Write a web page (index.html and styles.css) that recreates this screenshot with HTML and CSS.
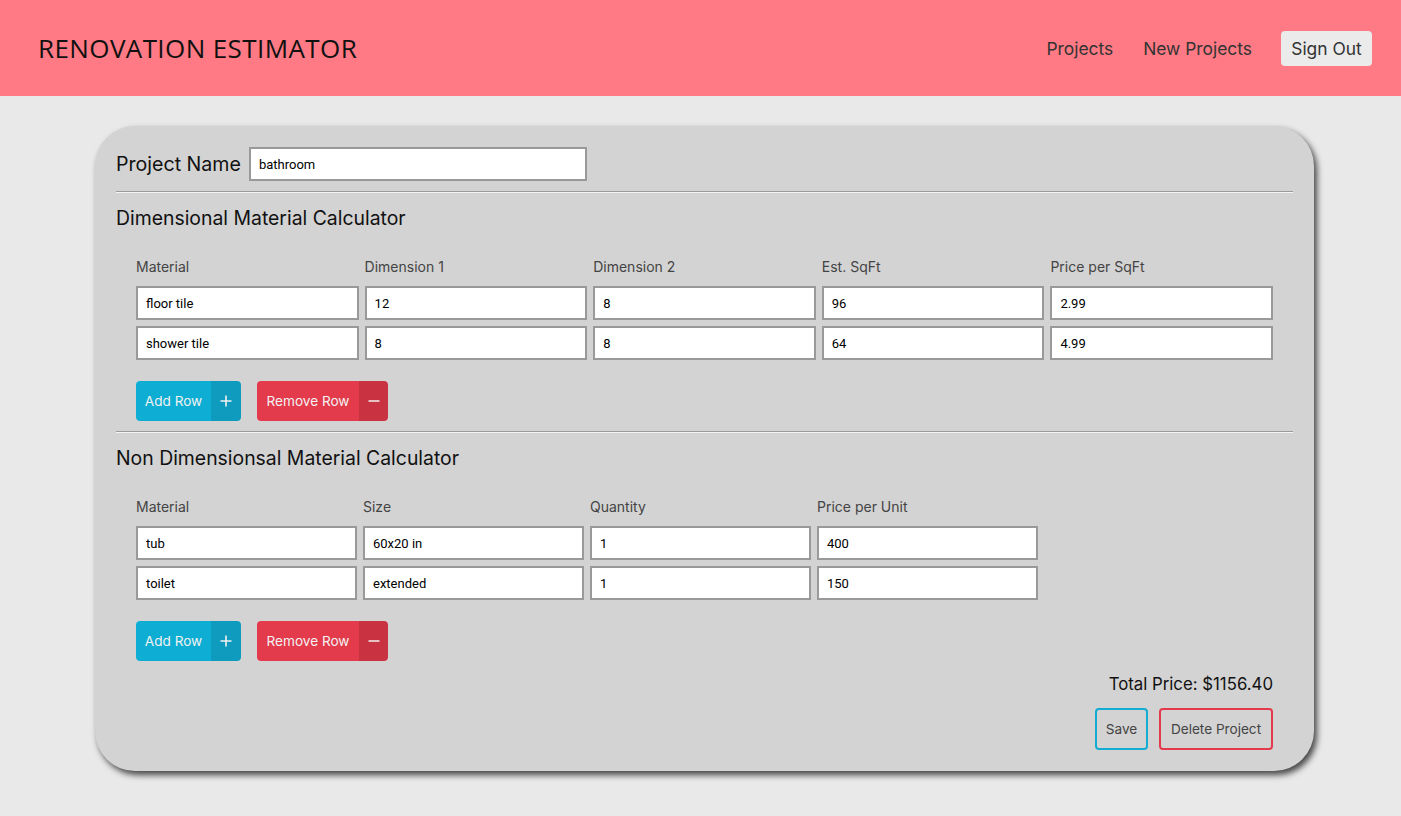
FILE: index.html
```html
<!DOCTYPE html>
<html lang="en">
<head>
<meta charset="utf-8">
<title>Renovation Estimator</title>
<link rel="stylesheet" href="styles.css">
</head>
<body>
<header class="topbar">
  <div class="brand">RENOVATION ESTIMATOR</div>
  <nav class="nav">
    <a class="nav-link" href="#">Projects</a>
    <a class="nav-link" href="#">New Projects</a>
    <button class="signout">Sign Out</button>
  </nav>
</header>

<main class="card">
  <div class="name-row">
    <label class="name-label">Project Name</label>
    <input class="field name-field" type="text" value="bathroom">
  </div>
  <hr class="rule">

  <h2 class="section-title">Dimensional Material Calculator</h2>
  <div class="calc">
    <div class="grid grid-5">
      <div class="col-head">Material</div>
      <div class="col-head">Dimension 1</div>
      <div class="col-head">Dimension 2</div>
      <div class="col-head">Est. SqFt</div>
      <div class="col-head">Price per SqFt</div>
      <input class="field" value="floor tile">
      <input class="field" value="12">
      <input class="field" value="8">
      <input class="field" value="96">
      <input class="field" value="2.99">
      <input class="field" value="shower tile">
      <input class="field" value="8">
      <input class="field" value="8">
      <input class="field" value="64">
      <input class="field" value="4.99">
    </div>
    <div class="btn-row">
      <button class="split add"><span class="split-text">Add Row</span><span class="split-icon"><svg width="12" height="12" viewBox="0 0 12 12"><path d="M6 0.5V11.5M0.5 6H11.5" stroke="currentColor" stroke-width="1.6"/></svg></span></button>
      <button class="split remove"><span class="split-text">Remove Row</span><span class="split-icon"><svg width="12" height="12" viewBox="0 0 12 12"><path d="M0.5 6H11.5" stroke="currentColor" stroke-width="1.6"/></svg></span></button>
    </div>
  </div>
  <hr class="rule">

  <h2 class="section-title">Non Dimensionsal Material Calculator</h2>
  <div class="calc">
    <div class="grid grid-4">
      <div class="col-head">Material</div>
      <div class="col-head">Size</div>
      <div class="col-head">Quantity</div>
      <div class="col-head">Price per Unit</div>
      <input class="field" value="tub">
      <input class="field" value="60x20 in">
      <input class="field" value="1">
      <input class="field" value="400">
      <input class="field" value="toilet">
      <input class="field" value="extended">
      <input class="field" value="1">
      <input class="field" value="150">
    </div>
    <div class="btn-row">
      <button class="split add"><span class="split-text">Add Row</span><span class="split-icon"><svg width="12" height="12" viewBox="0 0 12 12"><path d="M6 0.5V11.5M0.5 6H11.5" stroke="currentColor" stroke-width="1.6"/></svg></span></button>
      <button class="split remove"><span class="split-text">Remove Row</span><span class="split-icon"><svg width="12" height="12" viewBox="0 0 12 12"><path d="M0.5 6H11.5" stroke="currentColor" stroke-width="1.6"/></svg></span></button>
    </div>
  </div>

  <div class="footer">
    <div class="total">Total Price: $1156.40</div>
    <div class="actions">
      <button class="outline save">Save</button>
      <button class="outline delete">Delete Project</button>
    </div>
  </div>
</main>
</body>
</html>
```
FILE: styles.css
```css
* { box-sizing: border-box; }
html, body { margin: 0; padding: 0; }
body {
  background: #e9e9e9;
  font-family: "Inter", "Liberation Sans", sans-serif;
  color: #111;
  min-height: 816px;
}
.topbar {
  height: 96px;
  background: #ff7a84;
  display: flex;
  align-items: center;
  justify-content: space-between;
  padding: 0 29px 0 38px;
}
.brand {
  font-family: "Open Sans", "Liberation Sans", sans-serif;
  font-size: 26px;
  letter-spacing: 0.4px;
  color: #111;
}
.nav {
  display: flex;
  align-items: center;
}
.nav-link {
  font-size: 17.4px;
  color: #333;
  text-decoration: none;
  margin-right: 30px;
}
.nav-link:nth-child(2) { margin-right: 29px; }
.signout {
  font-family: inherit;
  font-size: 17.4px;
  color: #333;
  background: #ebebeb;
  border: none;
  border-radius: 4px;
  height: 35px;
  width: 91px;
  padding: 0;
  white-space: nowrap;
}
.card {
  margin: 30px 0 0 95px;
  width: 1219px;
  background: #d3d3d3;
  border-radius: 40px;
  box-shadow: 3px 4px 6px rgba(0,0,0,0.7);
  padding: 21px 21px 21px 21px;
}
.name-row {
  display: flex;
  align-items: center;
  gap: 8px;
  height: 34px;
}
.name-label { font-size: 19.6px; color: #111; white-space: nowrap; }
.field {
  font-family: "Roboto", "Liberation Sans", sans-serif;
  font-size: 13px;
  color: #000;
  background: #fff;
  border: 2px solid #999;
  height: 34px;
  padding: 0 8px;
  outline: none;
  width: 100%;
  min-width: 0;
  margin: 0;
}
.name-field { width: 338px; }
.rule {
  border: none;
  border-top: 1px solid #9b9b9b;
  border-bottom: 1px solid #f4f4f4;
  margin: 10px 0 0;
  height: 0;
}
.section-title {
  font-weight: normal;
  font-size: 19.4px;
  line-height: 24px;
  margin: 13px 0 0;
  color: #111;
}
.calc { padding: 27px 20px 0; }
.grid {
  display: grid;
  column-gap: 6px;
  row-gap: 6px;
}
.grid-5 { grid-template-columns: repeat(5, minmax(0, 1fr)); }
.grid-4 { grid-template-columns: repeat(4, 221px); }
.col-head {
  font-size: 14px;
  line-height: 20px;
  color: #444;
  margin-bottom: 3px;
}
.btn-row {
  display: flex;
  gap: 16px;
  margin-top: 21px;
}
.split {
  display: flex;
  height: 40px;
  padding: 0;
  border: none;
  border-radius: 4px;
  overflow: hidden;
  font-family: inherit;
  font-size: 13.6px;
  color: #f2f2f2;
  white-space: nowrap;
}
.split-text {
  display: flex;
  align-items: center;
  justify-content: center;
  height: 100%;
}
.split-icon {
  display: flex;
  align-items: center;
  justify-content: center;
  width: 30px;
  height: 100%;
}
.add .split-text { background: #0eadd3; width: 75px; }
.add .split-icon { background: #0e9bbd; }
.remove .split-text { background: #e33a4c; width: 102px; }
.remove .split-icon { background: #c93240; width: 29px; }
.footer {
  padding: 11px 20px 0;
  display: flex;
  flex-direction: column;
  align-items: flex-end;
}
.total { font-size: 16.8px; line-height: 24px; color: #111; }
.actions {
  display: flex;
  gap: 11px;
  margin-top: 12px;
}
.outline {
  height: 42px;
  background: transparent;
  border-radius: 4px;
  font-family: inherit;
  font-size: 13.6px;
  color: #444;
  padding: 0;
  white-space: nowrap;
}
.save { border: 2px solid #12acd2; width: 53px; }
.delete { border: 2px solid #e33a4c; width: 114px; }
```
